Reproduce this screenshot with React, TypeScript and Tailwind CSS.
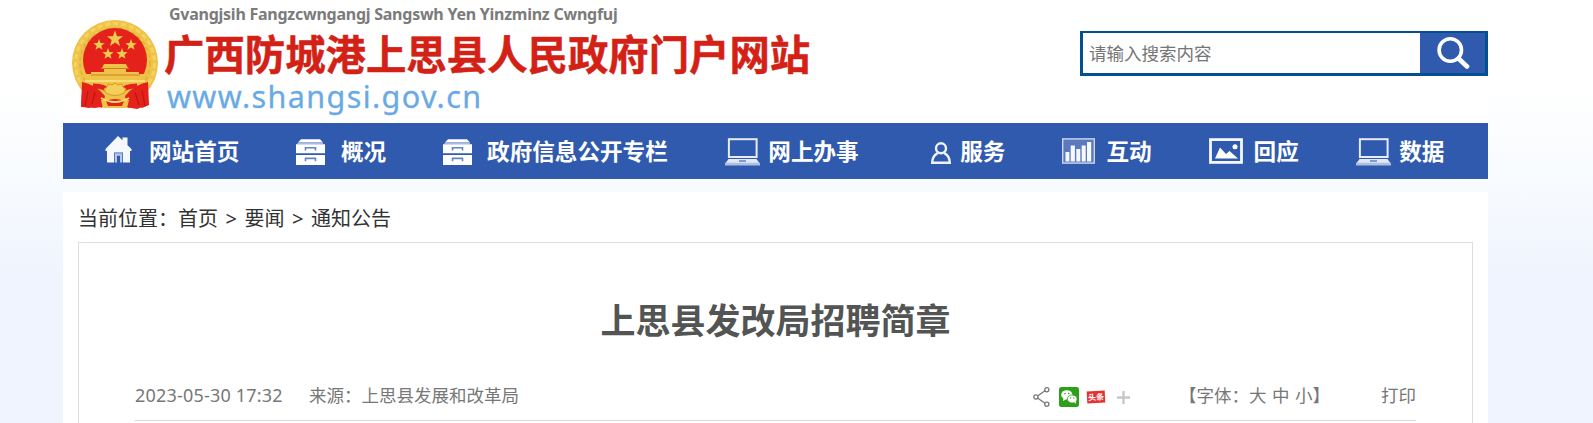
import { Fragment } from 'react'

const cjk = "font-['Noto_Sans','Noto_Sans_CJK_SC',sans-serif]"

function Star({ x, y, r }: { x: number; y: number; r: number }) {
  return (
    <polygon
      points="0,-10 2.4,-3.3 9.5,-3.1 3.9,1.3 5.9,8.1 0,4.1 -5.9,8.1 -3.9,1.3 -9.5,-3.1 -2.4,-3.3"
      transform={`translate(${x} ${y}) scale(${r / 10})`}
      fill="#eccb4f"
    />
  )
}

function Emblem() {
  return (
    <svg width="88" height="92" viewBox="0 0 88 92" className="flex-shrink-0">
      <path d="M12 62 L10 89 L24 90 L36 88 L44 90 L54 89 L66 91 L77 87 L75 62Z" fill="#e3241b" />
      <circle cx="44" cy="45" r="43" fill="#efc248" />
      <circle cx="44" cy="45" r="39.5" fill="none" stroke="#f5d266" strokeWidth="3" strokeDasharray="5 3" />
      <circle cx="44" cy="45" r="35" fill="none" stroke="#e3b03a" strokeWidth="1.5" strokeDasharray="4 3" />
      <circle cx="44" cy="42" r="32" fill="#e5211c" />
      <path d="M13 56 H75 L70 70 Q58 82 44 82 Q30 82 18 70Z" fill="#efc248" />
      {/* gate tower */}
      <path d="M33 46 h22 l2 4 h-2 v4 h13 v4 h-48 v-4 h13 v-4 h-2z" fill="#efc248" />
      <path d="M30 50.5h28M20 57h49" stroke="#cf7e20" strokeWidth="1" />
      <path d="M14 63h60" stroke="#f8dc77" strokeWidth="2" />
      {/* drapery */}
      <path d="M11 64 Q24 66 34 78 L31 90 L23 86 L18 90 L10 88Z" fill="#e5211c" />
      <path d="M77 64 Q64 66 54 78 L57 90 L66 86 L71 90 L78 87Z" fill="#e5211c" />
      <path d="M17 73 L14 88 M24 74 L21 86 M71 73 L74 88 M64 74 L68 87" stroke="#b9170f" strokeWidth="1.2" />
      <path d="M22 68 Q34 68 37 73 M66 68 Q54 68 51 73" stroke="#e5211c" strokeWidth="5" fill="none" />
      {/* gear */}
      <path d="M33 71 l3 -2 1-3 4 1 3-2 3 2 4-1 1 3 3 2-2 4 q-9 5-18 0z" fill="#f4cf59" stroke="#d89a26" strokeWidth="1" />
      <path d="M30 82 Q44 75 58 82 L56 90 H32Z" fill="#efc248" />
      <path d="M35 83 Q44 79 53 83 L51 88 H37Z" fill="#e5211c" />
      <path d="M30 80 Q44 88 58 80" stroke="#f8dc77" strokeWidth="2" fill="none" />
      <Star x={44} y={21} r={8.5} />
      <Star x={28} y={27} r={6} />
      <Star x={60} y={27} r={6} />
      <Star x={37} y={36} r={6} />
      <Star x={51} y={36} r={6} />
    </svg>
  )
}

function HomeIcon() {
  return (
    <svg width="27" height="27" viewBox="0 0 27 27" fill="#f5f8fd">
      <path d="M13 0 L17.5 4.3 V1.5 H22.5 V9.3 L26.5 13 V15 H25 V26.5 H18 V16.5 H9 V26.5 H2 V15 H0.5 V13Z" />
      <path d="M9.7 17.2h7.6v9.3h-2.3v-6.8h-3v6.8h-2.3z" fill="#b9c7e5" />
    </svg>
  )
}

function DrawerIcon() {
  return (
    <svg width="29" height="27" viewBox="0 0 29 27" fill="#fff">
      <path d="M5 1.2h19l3 3.2H2z" />
      <path d="M2 4.4h25v1.8H1z" fill="#a9bae0" />
      <path d="M0 6.2h29v9H0zM0 17h29v10H0z" />
      <path d="M9.5 12.5v-2.8h10v2.8M9.5 23.2v-2.8h10v2.8" fill="none" stroke="#6682c1" strokeWidth="1.6" />
    </svg>
  )
}

function LaptopIcon() {
  return (
    <svg width="35" height="28" viewBox="0 0 35 28">
      <rect x="3.9" y="1.2" width="27.7" height="17.8" fill="none" stroke="#e6ecf8" strokeWidth="2" />
      <path d="M3.5 21h28l3 4.3h-34z" fill="#e2e9f6" />
      <path d="M14 22.2h7v1.6h-7z" fill="#6b86c4" />
      <path d="M0 24.8h35V27.6H0z" fill="#aebfe1" />
    </svg>
  )
}

function PersonIcon() {
  return (
    <svg width="20" height="22" viewBox="0 0 20 22" fill="none" stroke="#eef3fb" strokeWidth="2.4">
      <circle cx="10" cy="6.3" r="5" />
      <path d="M6.7 11.1C3 13 1.3 16.5 1.2 20.7H18.8C18.7 16.5 17 13 13.3 11.1" />
    </svg>
  )
}

function ChartIcon() {
  return (
    <svg width="33" height="26" viewBox="0 0 33 26">
      <rect x="0.7" y="0.9" width="31.6" height="24.2" fill="#5a79bf" stroke="#cdd8ef" strokeWidth="1.4" />
      <path d="M3.5 14h3.9v9.5H3.5zM8.7 7.5h4.2v16H8.7zM14.3 11h4v12.5h-4zM19.7 7.5h4v16h-4zM25 4h4.2v19.5H25z" fill="#f5f8fd" />
    </svg>
  )
}

function ImageIcon() {
  return (
    <svg width="34" height="26" viewBox="0 0 34 26">
      <rect x="1.5" y="1.6" width="31" height="22.8" fill="none" stroke="#f5f8fd" strokeWidth="2.8" />
      <path d="M6 20.5 L11 9.5 L17 16 L20.5 13 L29 20.5Z" fill="#fff" />
      <circle cx="26" cy="8.7" r="2.5" fill="#fff" />
    </svg>
  )
}

const navItems = [
  { icon: HomeIcon, label: '网站首页', box: 'ml-[42px] gap-[17px]', lift: '-mt-1' },
  { icon: DrawerIcon, label: '概况', box: 'ml-[57px] gap-[15.5px]', lift: '' },
  { icon: DrawerIcon, label: '政府信息公开专栏', box: 'ml-[56.5px] gap-[15.5px]', lift: '' },
  { icon: LaptopIcon, label: '网上办事', box: 'ml-[57.5px] gap-2', lift: 'mt-0.5' },
  { icon: PersonIcon, label: '服务', box: 'ml-[72.5px] gap-[9px]', lift: 'mt-1' },
  { icon: ChartIcon, label: '互动', box: 'ml-[57px] gap-[11px]', lift: '' },
  { icon: ImageIcon, label: '回应', box: 'ml-[57.5px] gap-[10.5px]', lift: '' },
  { icon: LaptopIcon, label: '数据', box: 'ml-[57.5px] gap-2', lift: 'mt-0.5' },
]

const crumbs = ['首页', '要闻', '通知公告']

function Header() {
  return (
    <header className="h-[123px] bg-white flex justify-between">
      <div className="flex pt-[18px] pl-2">
        <Emblem />
        <div className="-mt-[18px] ml-[5px] flex flex-col whitespace-nowrap">
          <p className="mt-1 ml-[5px] h-5 leading-5 text-[16px] tracking-[-0.25px] font-bold text-[#7b7b7b] font-['Noto_Sans',sans-serif]">
            Gvangjsih Fangzcwngangj Sangswh Yen Yinzminz Cwngfuj
          </p>
          <h1 className="mt-[9px] h-10 leading-10 text-[40.4px] font-bold text-[#d32116] [-webkit-text-stroke:0.5px_#d32116] font-['Noto_Sans_CJK_SC',sans-serif]">
            广西防城港上思县人民政府门户网站
          </h1>
          <p className="mt-[5px] ml-[3px] h-9 leading-9 text-[30.5px] tracking-[1.4px] text-[#6aaae4] [-webkit-text-stroke:0.3px_#6aaae4] font-['Noto_Sans',sans-serif]">
            www.shangsi.gov.cn
          </p>
        </div>
      </div>
      <form className="mt-[31px] w-[408px] h-[45px] flex border-x-[3px] border-t-2 border-b-[3px] border-[#02508f]">
        <input
          type="text"
          placeholder="请输入搜索内容"
          className={`flex-1 min-w-0 pl-1.5 bg-white text-[17.5px] placeholder:text-[#757575] outline-none ${cjk}`}
        />
        <button type="button" className="w-[65px] bg-[#2f5aae] flex items-center justify-center">
          <svg width="34" height="34" viewBox="0 0 34 34" fill="none" stroke="#fff" strokeLinecap="round">
            <circle cx="14.3" cy="14" r="11.2" strokeWidth="3.6" />
            <path d="M22.5 22.5 L31 30.5" strokeWidth="4.6" />
          </svg>
        </button>
      </form>
    </header>
  )
}

function Nav() {
  return (
    <nav className="h-14 bg-[#2f5aae] flex items-center">
      {navItems.map((item) => (
        <a key={item.label} className={`flex items-center flex-shrink-0 ${item.box}`}>
          <span className={item.lift}>
            <item.icon />
          </span>
          <span className={`pt-0.5 text-[22.6px] leading-[30px] font-bold text-white whitespace-nowrap ${cjk}`}>
            {item.label}
          </span>
        </a>
      ))}
    </nav>
  )
}

function ShareTools() {
  return (
    <div className="flex items-center h-5 mt-0.5">
      <svg width="17" height="20" viewBox="0 0 17 20" fill="none" stroke="#777" strokeWidth="1.3">
        <path d="M4.5 9 L12 3.8 M4.5 11 L12 16.3" />
        <circle cx="2.9" cy="10" r="2.1" />
        <circle cx="13.8" cy="2.8" r="2.1" />
        <circle cx="13.8" cy="17.2" r="2.1" />
      </svg>
      <svg width="20" height="20" viewBox="0 0 20 20" className="ml-[9px]">
        <rect width="20" height="20" rx="2.5" fill="#2da01a" />
        <ellipse cx="7.8" cy="7.8" rx="5.6" ry="4.6" fill="#fff" />
        <path d="M4.5 11 L4 14 L7.5 12Z" fill="#fff" />
        <ellipse cx="13.2" cy="12" rx="4.9" ry="4" fill="#fff" stroke="#2da01a" strokeWidth="0.8" />
        <path d="M15 15 L17 17 L16.8 14Z" fill="#fff" />
        <g fill="#2da01a">
          <circle cx="6" cy="6.5" r="0.8" />
          <circle cx="9.7" cy="6.5" r="0.8" />
          <circle cx="11.6" cy="10.9" r="0.7" />
          <circle cx="14.8" cy="10.9" r="0.7" />
        </g>
      </svg>
      <span className="ml-2 w-[18px] h-3 bg-[#e6322f] -rotate-3 flex items-center justify-center text-[8px] leading-none font-bold text-white whitespace-nowrap font-['Noto_Sans_CJK_SC',sans-serif]">
        头条
      </span>
      <svg width="13" height="13" viewBox="0 0 13 13" className="ml-3" stroke="#c8c8c8" strokeWidth="2.4">
        <path d="M6.5 0V13M0 6.5H13" />
      </svg>
    </div>
  )
}

export default function App() {
  return (
    <div className={`h-[423px] overflow-hidden bg-linear-to-b from-white from-20% via-[#f5f9fe] via-50% to-[#eff4fe] to-65% ${cjk}`}>
      <div className="ml-[63px] w-[1425px]">
        <Header />
        <Nav />
        <main className="mt-[13px] h-[231px] bg-white px-[15px] flex flex-col">
          <div className="h-[50px] leading-[53px] text-[20px] text-[#333] flex whitespace-nowrap">
            <span>当前位置：</span>
            {crumbs.map((crumb, i) => (
              <Fragment key={crumb}>
                {i > 0 && <span className="w-[26.5px] text-center">&gt;</span>}
                <a>{crumb}</a>
              </Fragment>
            ))}
          </div>
          <article className="w-[1395px] flex-1 border border-b-0 border-[#ddd] px-14">
            <h2 className="mt-[50px] h-14 leading-[56px] text-center text-[35px] font-bold text-[#535555]">
              上思县发改局招聘简章
            </h2>
            <div className="mt-[36px] h-9 border-b border-[#d9d9d9] flex text-[17.5px] leading-5 text-[#777] whitespace-nowrap">
              <span className="w-[174px] text-[18px] tracking-[0.2px]">2023-05-30 17:32</span>
              <span>来源：上思县发展和改革局</span>
              <div className="ml-auto flex">
                <ShareTools />
                <span className="ml-[49px] w-[202px] [word-spacing:1px]">【字体：大 中 小】</span>
                <a>打印</a>
              </div>
            </div>
          </article>
        </main>
      </div>
    </div>
  )
}
